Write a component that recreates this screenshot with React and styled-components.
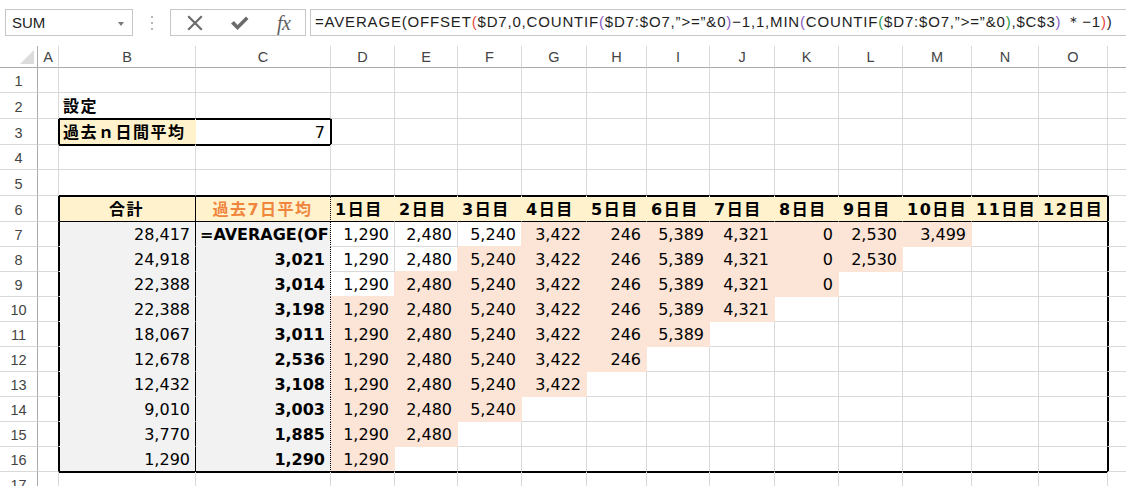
import React from 'react';
import styled, { createGlobalStyle } from 'styled-components';

const GlobalStyle = createGlobalStyle`
  html, body { margin: 0; padding: 0; background: #fff; }
  body { width: 1126px; height: 486px; overflow: hidden; font-family: "Liberation Sans", Arial, sans-serif; }
`;

const COLS = [38, 21, 137, 135, 64, 63, 64, 65, 60, 63, 65, 64, 64, 69, 67, 69, 69];
const ROWS = [22, 25, 26, 26, 25, 26, 26, 25, 25, 25, 25, 25, 25, 25, 25, 25, 25, 25];
const LETTERS = ['', 'A', 'B', 'C', 'D', 'E', 'F', 'G', 'H', 'I', 'J', 'K', 'L', 'M', 'N', 'O', 'P'];

const GRID = '#D9D9D9';
const HEAD_LINE = '#ABABAB';
const YELLOW = '#FFF2CC';
const GRAY = '#F2F2F2';
const PINK = '#FCE4D6';
const ORANGE = '#F0863E';

const D_VALUES = ['1,290', '2,480', '5,240', '3,422', '246', '5,389', '4,321', '0', '2,530', '3,499'];
const B_VALUES = ['28,417', '24,918', '22,388', '22,388', '18,067', '12,678', '12,432', '9,010', '3,770', '1,290'];
const C_VALUES = [null, '3,021', '3,014', '3,198', '3,011', '2,536', '3,108', '3,003', '1,885', '1,290'];

const Page = styled.div`
  width: 1126px;
  height: 486px;
  overflow: hidden;
  background: #fff;
  display: flex;
  flex-direction: column;
`;

const Toolbar = styled.div`
  flex: none;
  height: 46px;
  box-sizing: border-box;
  padding: 9px 0 0 5px;
  display: flex;
  align-items: flex-start;
`;

const NameBox = styled.div`
  flex: none;
  width: 128px;
  height: 27px;
  box-sizing: border-box;
  border: 1px solid #C6C6C6;
  display: flex;
  align-items: center;
  justify-content: space-between;
  padding: 0 8px 0 6px;
  font-family: "Liberation Sans", Arial, sans-serif;
  font-size: 15px;
  color: #222;
`;

const DropArrow = styled.span`
  width: 0;
  height: 0;
  border-left: 3.5px solid transparent;
  border-right: 3.5px solid transparent;
  border-top: 4px solid #7a7a7a;
  margin-top: 2px;
`;

const Grip = styled.div`
  flex: none;
  width: 37px;
  height: 27px;
  display: flex;
  flex-direction: column;
  align-items: center;
  justify-content: center;
  gap: 4px;
`;

const GripDot = styled.span`
  width: 2px;
  height: 2px;
  background: #B8B8B8;
`;

const FxBox = styled.div`
  flex: none;
  width: 136px;
  height: 27px;
  box-sizing: border-box;
  border: 1px solid #C6C6C6;
  display: flex;
  align-items: center;
  padding-left: 16px;
  gap: 27px;
  color: #6B6B6B;
`;

const FxText = styled.span`
  font-family: "Liberation Serif", "Times New Roman", serif;
  font-style: italic;
  font-size: 20px;
  line-height: 20px;
  color: #5E5E5E;
  margin-left: 1px;
  letter-spacing: -0.5px;
`;

const FormulaBox = styled.div`
  flex: 1;
  height: 27px;
  margin-left: 4px;
  box-sizing: border-box;
  border: 1px solid #C6C6C6;
  border-right: none;
  display: flex;
  align-items: center;
  padding-left: 4px;
  overflow: hidden;
`;

const FormulaText = styled.div`
  font-family: "Liberation Sans", Arial, sans-serif;
  font-size: 15px;
  color: #1E1E1E;
  white-space: nowrap;
  letter-spacing: 0.82px;
`;

const Paren = styled.span`
  color: ${(p) => p.$c};
`;

const Sheet = styled.div`
  display: grid;
  width: max-content;
  grid-template-columns: ${COLS.map((w) => `${w}px`).join(' ')};
  grid-template-rows: ${ROWS.map((h) => `${h}px`).join(' ')};
`;

const Corner = styled.div`
  box-sizing: border-box;
  border-right: 1px solid ${HEAD_LINE};
  border-bottom: 1px solid ${HEAD_LINE};
  display: flex;
  align-items: flex-end;
  justify-content: flex-end;
  padding: 0 3px 3px 0;
`;

const CornerTriangle = styled.span`
  width: 0;
  height: 0;
  border-left: 14px solid transparent;
  border-bottom: 14px solid #DCDCDC;
`;

const ColHead = styled.div`
  box-sizing: border-box;
  border-right: 1px solid ${GRID};
  border-bottom: 1px solid ${HEAD_LINE};
  display: flex;
  align-items: center;
  justify-content: center;
  font-family: "Liberation Sans", Arial, sans-serif;
  font-size: 14.5px;
  color: #444;
  padding-top: 1px;
`;

const RowHead = styled.div`
  box-sizing: border-box;
  border-right: 1px solid ${HEAD_LINE};
  border-bottom: 1px solid ${GRID};
  display: flex;
  align-items: flex-end;
  justify-content: center;
  padding-bottom: 2px;
  font-family: "Liberation Sans", Arial, sans-serif;
  font-size: 14.5px;
  line-height: 18px;
  color: #444;
`;

const Cell = styled.div`
  box-sizing: border-box;
  overflow: hidden;
  white-space: nowrap;
  display: flex;
  align-items: flex-end;
  justify-content: ${(p) => (p.$align === 'right' ? 'flex-end' : p.$align === 'center' ? 'center' : 'flex-start')};
  padding: 0 5px 1px 4px;
  background: ${(p) => p.$fill || '#fff'};
  border-right: 1px ${(p) => p.$rs} ${(p) => p.$rc};
  border-bottom: 1px solid ${(p) => p.$bc};
  box-shadow: ${(p) => p.$shadow || 'none'};
  font-family: "DejaVu Sans", "Noto Sans CJK JP", sans-serif;
  font-size: 16px;
  line-height: 20px;
  font-weight: ${(p) => (p.$bold ? 700 : 400)};
  color: ${(p) => p.$color || '#000'};
`;

const Jp = styled.span`
  letter-spacing: 1.5px;
`;

/* ---------- cell model ---------- */

function fillOf(r, c) {
  if (r === 3 && c === 2) return YELLOW;
  if (r === 6 && c >= 2 && c <= 15) return YELLOW;
  if (r >= 7 && r <= 16 && (c === 2 || c === 3)) return GRAY;
  if (r >= 7 && r <= 16 && c >= 4) {
    const n = 17 - r;
    const i = c - 4;
    if (i < n && i >= n - 7) return PINK;
  }
  return null;
}

const rightEdge = {};
const bottomEdge = {};
const shadowTop = new Set();
const shadowLeft = new Set();

function thick(r1, c1, r2, c2) {
  for (let c = c1; c <= c2; c++) {
    bottomEdge[`${r1 - 1},${c}`] = 'solid';
    shadowTop.add(`${r1},${c}`);
    bottomEdge[`${r2},${c}`] = 'solid';
    shadowTop.add(`${r2 + 1},${c}`);
  }
  for (let r = r1; r <= r2; r++) {
    rightEdge[`${r},${c1 - 1}`] = 'solid';
    shadowLeft.add(`${r},${c1}`);
    rightEdge[`${r},${c2}`] = 'solid';
    shadowLeft.add(`${r},${c2 + 1}`);
  }
}

thick(3, 2, 3, 3);
thick(6, 2, 16, 15);
for (let c = 2; c <= 15; c++) bottomEdge[`6,${c}`] = 'solid';
for (let r = 6; r <= 16; r++) {
  rightEdge[`${r},2`] = 'solid';
  rightEdge[`${r},3`] = 'dotted';
}

function contentOf(r, c) {
  if (r === 2 && c === 2) return { text: '設定', bold: true, jp: true };
  if (r === 3 && c === 2) return { text: '過去ｎ日間平均', bold: true, jp: true };
  if (r === 3 && c === 3) return { text: '7', align: 'right' };
  if (r === 6) {
    if (c === 2) return { text: '合計', bold: true, jp: true, align: 'center' };
    if (c === 3) return { text: '過去7日平均', bold: true, jp: true, align: 'center', color: ORANGE };
    if (c >= 4 && c <= 15) return { text: `${c - 3}日目`, bold: true, jp: true };
  }
  if (r >= 7 && r <= 16) {
    const k = r - 7;
    if (c === 2) return { text: B_VALUES[k], align: 'right' };
    if (c === 3) {
      if (k === 0) return { text: '=AVERAGE(OFFSET($D7', bold: true };
      return { text: C_VALUES[k], bold: true, align: 'right' };
    }
    if (c >= 4) {
      const n = 17 - r;
      const i = c - 4;
      if (i < n) return { text: D_VALUES[i], align: 'right' };
    }
  }
  return null;
}

function cellProps(r, c) {
  const key = `${r},${c}`;
  const fill = fillOf(r, c);
  let rs = 'solid';
  let rc;
  if (rightEdge[key]) {
    rs = rightEdge[key];
    rc = '#000';
  } else {
    const f = fill || fillOf(r, c + 1);
    rc = f || GRID;
  }
  let bc;
  if (bottomEdge[key]) bc = '#000';
  else bc = fill || fillOf(r + 1, c) || GRID;
  const shadows = [];
  if (shadowTop.has(key)) shadows.push('inset 0 1px 0 #000');
  if (shadowLeft.has(key)) shadows.push('inset 1px 0 0 #000');
  return { $fill: fill, $rs: rs, $rc: rc, $bc: bc, $shadow: shadows.join(', ') || null };
}

/* ---------- icons ---------- */

const CancelIcon = () => (
  <svg width="16" height="16" viewBox="0 0 16 16" fill="none">
    <path d="M2 2 L14 14 M14 2 L2 14" stroke="#6B6B6B" strokeWidth="2.2" strokeLinecap="square" />
  </svg>
);

const CheckIcon = () => (
  <svg width="19" height="16" viewBox="0 0 19 16">
    <path d="M1 8.5 L4 6 L7.5 10 L16 1.5 L18.5 4 L7.5 15 Z" fill="#6B6B6B" />
  </svg>
);

/* ---------- formula ---------- */

const RED = '#E2493F';
const PURPLE = '#8A5CC4';
const GREEN = '#2E9A48';

const Formula = () => (
  <FormulaText>
    =AVERAGE(OFFSET<Paren $c={RED}>(</Paren>$D7,0,COUNTIF<Paren $c={PURPLE}>(</Paren>
    $D7:$O7,”&gt;=”&amp;0<Paren $c={PURPLE}>)</Paren>−1,1,MIN<Paren $c={PURPLE}>(</Paren>COUNTIF
    <Paren $c={GREEN}>(</Paren>$D7:$O7,”&gt;=”&amp;0<Paren $c={GREEN}>)</Paren>,$C$3
    <Paren $c={PURPLE}>)</Paren> ＊−1<Paren $c={RED}>)</Paren>)
  </FormulaText>
);

export default function App() {
  const cells = [];
  for (let r = 0; r < ROWS.length; r++) {
    for (let c = 0; c < COLS.length; c++) {
      const key = `${r}-${c}`;
      if (r === 0 && c === 0) {
        cells.push(
          <Corner key={key}>
            <CornerTriangle />
          </Corner>
        );
      } else if (r === 0) {
        cells.push(<ColHead key={key}>{LETTERS[c]}</ColHead>);
      } else if (c === 0) {
        cells.push(<RowHead key={key}>{r}</RowHead>);
      } else {
        const content = contentOf(r, c);
        const props = cellProps(r, c);
        cells.push(
          <Cell
            key={key}
            {...props}
            $align={content?.align}
            $bold={content?.bold}
            $color={content?.color}
          >
            {content ? content.jp ? <Jp>{content.text}</Jp> : content.text : null}
          </Cell>
        );
      }
    }
  }

  return (
    <>
      <GlobalStyle />
      <Page>
        <Toolbar>
          <NameBox>
            SUM
            <DropArrow />
          </NameBox>
          <Grip>
            <GripDot />
            <GripDot />
            <GripDot />
          </Grip>
          <FxBox>
            <CancelIcon />
            <CheckIcon />
            <FxText>fx</FxText>
          </FxBox>
          <FormulaBox>
            <Formula />
          </FormulaBox>
        </Toolbar>
        <Sheet>{cells}</Sheet>
      </Page>
    </>
  );
}
